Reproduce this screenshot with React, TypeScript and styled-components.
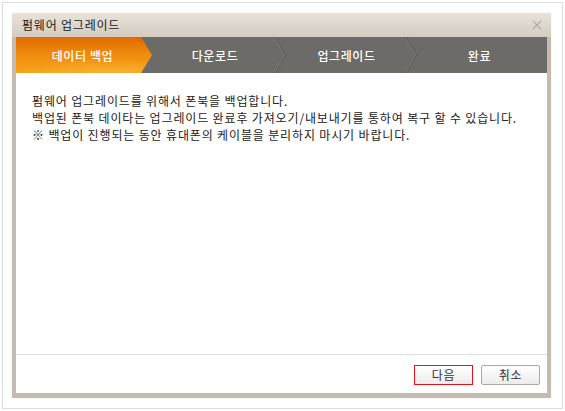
import styled, { createGlobalStyle } from 'styled-components';

const GlobalStyle = createGlobalStyle`
    html, body {
        margin: 0;
        padding: 0;
        background: #ffffff;
    }

    body {
        font-family: 'Noto Sans CJK KR', 'Noto Sans', sans-serif;
        font-size: 12px;
        color: #222222;
    }
`;

const Frame = styled.div`
    box-sizing: border-box;
    width: 561px;
    height: 407px;
    margin: 2px 0 0 2px;
    padding: 10px 11px 10px 9px;
    border: 1px solid #dddddd;
`;

const Dialog = styled.div`
    box-sizing: border-box;
    height: 100%;
    display: flex;
    flex-direction: column;
    background: #c4bcb0;
    padding: 0 4px 5px 4px;
    box-shadow: 0 0 2px rgba(0, 0, 0, 0.08);
`;

const TitleBar = styled.div`
    height: 24px;
    margin: 0 -4px;
    padding: 0 10px;
    display: flex;
    align-items: center;
    justify-content: space-between;
    background: linear-gradient(#e8e2da, #d4ccc1);
`;

const Title = styled.span`
    font-size: 12px;
    color: #1a1a1a;
    line-height: 1;
    letter-spacing: 0.8px;
`;

const CloseButton = styled.button`
    width: 12px;
    height: 12px;
    padding: 0;
    border: 0;
    background: none;
    display: flex;
    margin-right: -2px;
`;

const Steps = styled.div`
    height: 36px;
    display: flex;
    background: #6d6b67;
`;

const Step = styled.div<{ $active?: boolean; $width: number }>`
    position: relative;
    width: ${(p) => p.$width}px;
    display: flex;
    align-items: center;
    justify-content: center;
    color: #ffffff;
    font-size: 12px;
    font-weight: 500;
    letter-spacing: 0.6px;
    z-index: ${(p) => (p.$active ? 2 : 1)};

    &::before {
        content: '';
        display: ${(p) => (p.$active ? 'block' : 'none')};
        position: absolute;
        top: 0;
        left: 0;
        bottom: 0;
        width: calc(100% + 3px);
        background:
            radial-gradient(ellipse 90px 14px at 70% 100%, rgba(255, 200, 80, 0.35), transparent),
            linear-gradient(#e06a00, #ef8a0c 45%, #f7a41e);
        clip-path: polygon(0 0, calc(100% - 11px) 0, 100% 50%, calc(100% - 11px) 100%, 0 100%);
    }
`;

const StepLabel = styled.span`
    position: relative;
`;

const Divider = styled.svg`
    position: absolute;
    top: 0;
    right: -6px;
`;

const Content = styled.div`
    flex: 1;
    background: #ffffff;
    padding: 19px 16px;
    line-height: 17px;
    letter-spacing: 0.85px;
`;

const Footer = styled.div`
    height: 38px;
    background: #ffffff;
    border-top: 1px solid #dedede;
    display: flex;
    justify-content: flex-end;
    align-items: center;
    gap: 8px;
    padding: 0 7px 0 0;
`;

const Button = styled.button<{ $focus?: boolean }>`
    box-sizing: border-box;
    width: 59px;
    height: 20px;
    padding: 0;
    font-family: inherit;
    font-size: 12px;
    letter-spacing: 0.6px;
    color: #333333;
    border: 1px solid ${(p) => (p.$focus ? '#e8101a' : '#a8a8a8')};
    border-radius: ${(p) => (p.$focus ? '0' : '2px')};
    background: linear-gradient(#ffffff, #ececec);
    margin-top: 1px;
`;

const steps = [
    { label: '데이터 백업', width: 133 },
    { label: '다운로드', width: 132 },
    { label: '업그레이드', width: 131 },
    { label: '완료', width: 135 },
];

const App = () => {
    return (
        <>
            <GlobalStyle />
            <Frame>
                <Dialog>
                    <TitleBar>
                        <Title>펌웨어 업그레이드</Title>
                        <CloseButton aria-label="닫기">
                            <svg width="12" height="12" viewBox="0 0 12 12">
                                <path d="M2 2L10 10M10 2L2 10" stroke="#b6ada2" strokeWidth="1.2" />
                            </svg>
                        </CloseButton>
                    </TitleBar>
                    <Steps>
                        {steps.map((s, i) => (
                            <Step key={s.label} $active={i === 0} $width={s.width}>
                                <StepLabel>{s.label}</StepLabel>
                                {i > 0 && i < steps.length - 1 && (
                                    <Divider width="12" height="36" viewBox="0 0 12 36">
                                        <path d="M0.5 0L10.5 18L0.5 36" stroke="#575551" strokeWidth="1" fill="none" />
                                        <path d="M-0.5 0L9.5 18L-0.5 36" stroke="#7c7a76" strokeWidth="1" fill="none" />
                                    </Divider>
                                )}
                            </Step>
                        ))}
                    </Steps>
                    <Content>
                        펌웨어 업그레이드를 위해서 폰북을 백업합니다.
                        <br />
                        백업된 폰북 데이타는 업그레이드 완료후 가져오기/내보내기를 통하여 복구 할 수 있습니다.
                        <br />※ 백업이 진행되는 동안 휴대폰의 케이블을 분리하지 마시기 바랍니다.
                    </Content>
                    <Footer>
                        <Button $focus>다음</Button>
                        <Button>취소</Button>
                    </Footer>
                </Dialog>
            </Frame>
        </>
    );
};

export default App;
